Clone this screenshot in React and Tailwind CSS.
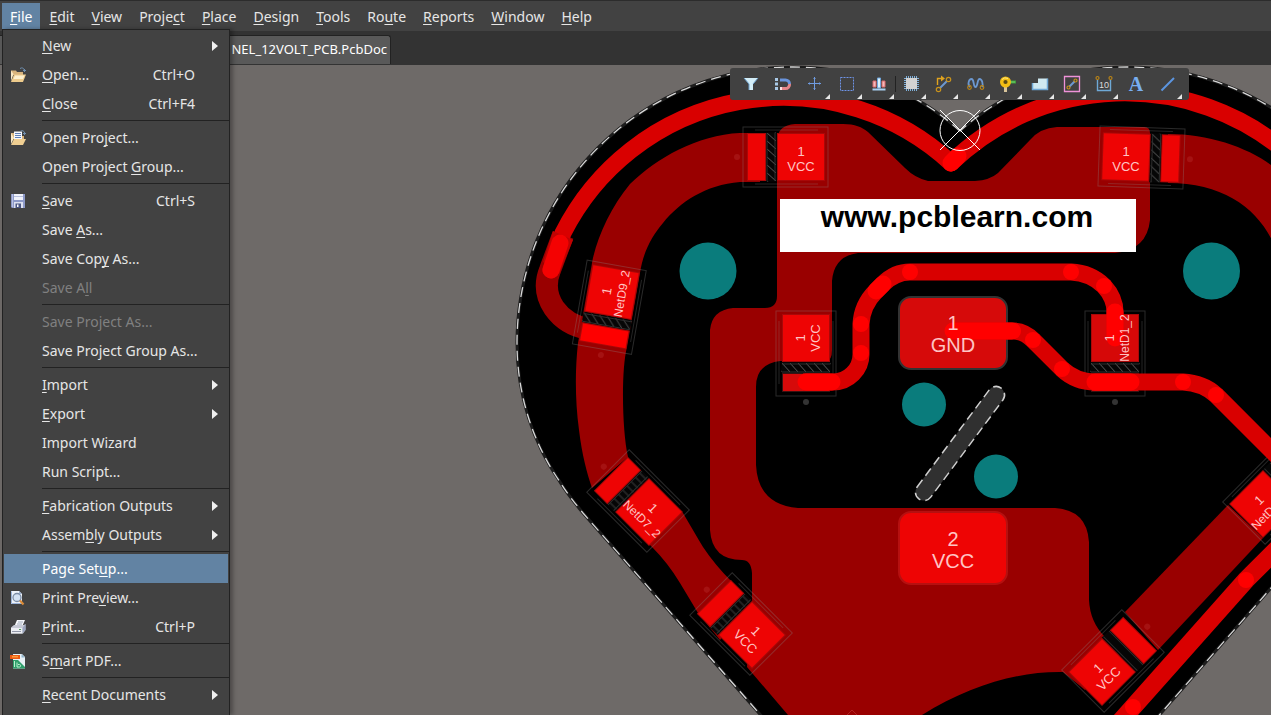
import React from "react";

const MENUS = ["_File", "_Edit", "_View", "Proje_ct", "_Place", "_Design", "_Tools", "Ro_ute", "_Reports", "_Window", "_Help"];

const FILE_GROUPS = [
  [
    { label: "_New", sub: true },
    { label: "_Open...", keys: "Ctrl+O", icon: "open" },
    { label: "_Close", keys: "Ctrl+F4" },
  ],
  [{ label: "Open Pro_ject...", icon: "project" }, { label: "Open Project _Group..." }],
  [
    { label: "_Save", keys: "Ctrl+S", icon: "save" },
    { label: "Save _As..." },
    { label: "Save Cop_y As..." },
    { label: "Save A_ll", disabled: true },
  ],
  [{ label: "Save Project As...", disabled: true }, { label: "Save Project Group As..." }],
  [
    { label: "_Import", sub: true },
    { label: "_Export", sub: true },
    { label: "Import Wizard" },
    { label: "Run Script..." },
  ],
  [{ label: "_Fabrication Outputs", sub: true }, { label: "Assem_bly Outputs", sub: true }],
  [
    { label: "Page Set_up...", active: true },
    { label: "Print Pre_view...", icon: "preview" },
    { label: "_Print...", keys: "Ctrl+P", icon: "print" },
  ],
  [{ label: "S_mart PDF...", icon: "pdf" }],
  [{ label: "_Recent Documents", sub: true }],
];

function Mnemonic({ text }) {
  const i = text.indexOf("_");
  if (i < 0) return <span>{text}</span>;
  return (
    <span>
      {text.slice(0, i)}
      <span className="underline decoration-1 underline-offset-2 [text-decoration-skip-ink:none]">{text[i + 1]}</span>
      {text.slice(i + 2)}
    </span>
  );
}

const FILE_ICONS = {
  open: (
    <>
      <path d="M1 3.500h5l1 1.500h6v3H1z" fill="#d9b47c" />
      <path d="M1 3.500V14l2.500-7z" fill="#fbe9c4" />
      <path d="M4 7.500h12L13 15H1z" fill="#eecb8c" />
      <path d="M5 8.500h9.500l-1.500 3.500H3.500z" fill="#fdf0cf" />
      <path d="M10 1.500c2-1.200 3.500-.5 4.500 1.500M13 3.500h3M14.500 2v3" stroke="#6f8fb0" fill="none" />
    </>
  ),
  project: (
    <>
      <path d="M1 3h4v3h9v3H1z" fill="#d9b47c" />
      <path d="M4 1.500h8V10H4z" fill="#f4f7fd" />
      <path d="M5 3.500h6M5 5.500h6M5 7.500h6" stroke="#5f7fb5" />
      <path d="M1 3v11l3-6z" fill="#fbe9c4" />
      <path d="M4 9h12l-3 6H1z" fill="#f0cf92" />
      <path d="M10.500 1c2-.8 3.500 0 4 1.500M13 3.500h3M14.500 2v3" stroke="#6f8fb0" fill="none" />
    </>
  ),
  save: (
    <>
      <path d="M1 1h14v14H2l-1-1z" fill="#8d99c8" />
      <path d="M4 1h9v6H4z" fill="#f1f3fb" />
      <path d="M4 3.500h9" stroke="#b8c0de" />
      <path d="M4 9h9v6H4z" fill="#dde1f0" />
      <path d="M5.500 10.500h5.500V15H5.500z" fill="#4b5684" />
      <path d="M7 11.500h1.500V14H7z" fill="#fff" />
      <path d="M2.500 1v13" stroke="#b9c1e2" />
    </>
  ),
  preview: (
    <>
      <path d="M1 1h8l3 3v10H1z" fill="#eef3fa" />
      <path d="M9 1l3 3H9z" fill="#9fb4d3" />
      <path d="M1.500 1.500v12h10" stroke="#9db5da" fill="none" />
      <circle cx="7" cy="7.500" r="4" fill="#d4e2f3" stroke="#7d8ea6" strokeWidth="1.300" />
      <path d="M10 10.500l3.500 4" stroke="#d98a38" strokeWidth="2.200" />
    </>
  ),
  print: (
    <>
      <path d="M7 1h8l-3 7H4z" fill="#f6f7fa" />
      <path d="M8 3h5M7 5h5M6 7h4" stroke="#8b95a8" strokeWidth=".8" />
      <path d="M1 8.500L4 6h10l1.500-1v6L13 14.500H1z" fill="#c6c9d4" />
      <path d="M1 9h11.500v5.500H1z" fill="#eceef3" />
      <path d="M2 12.500h9" stroke="#9297a8" />
      <path d="M12.500 9L15.500 5v6L12.500 14.500z" fill="#9aa3bd" />
      <path d="M9 10.500h2" stroke="#4f9a58" />
    </>
  ),
  pdf: (
    <>
      <path d="M3 1h9l3 3v11.500H3z" fill="#e9f1f6" />
      <path d="M11.500 1L15 4.500h-3.500z" fill="#8fb4cc" />
      <path d="M3 7h5l7 7v1.500H3z" fill="#2f9e6b" />
      <path d="M4.500 8v6M7 9.500v4.500h2.500c1.500 0 1.500-2.500 0-2.500H8" stroke="#baf0cf" fill="none" />
      <path d="M0 2h10v4H0z" fill="#ee5a12" />
      <path d="M2 3.800h6" stroke="#ffb04a" strokeWidth="1.200" />
    </>
  ),
};

function MenuBar() {
  return (
    <nav aria-label="Main menu" className="flex h-[31px] shrink-0 items-stretch gap-px border-t border-[#2c2c2c] bg-[#424242] pl-[2px] pt-[2px] pb-[2px]">
      {MENUS.map((m, i) => (
        <button
          key={m}
          type="button"
          className={
            i === 0
              ? "bg-[#6283a3] px-2 pt-0.5 text-sm leading-6 text-white"
              : "px-2 pt-0.5 text-sm leading-6 text-[#e6e6e6]"
          }
        >
          <Mnemonic text={m} />
        </button>
      ))}
    </nav>
  );
}

function MenuItem({ item }) {
  const tone = item.disabled ? "text-[#808080]" : item.active ? "bg-[#6283a3] text-white" : "text-[#e6e6e6]";
  return (
    <button
      type="button"
      role="menuitem"
      disabled={item.disabled}
      className={"flex h-[29px] w-full items-center pl-1.5 pr-2.5 text-left text-sm " + tone}
    >
      <span className="w-8 shrink-0">
        {item.icon && (
          <svg className="h-4 w-4" viewBox="0 0 16 16" aria-hidden="true">
            {FILE_ICONS[item.icon]}
          </svg>
        )}
      </span>
      <span className="flex-1 whitespace-nowrap">
        <Mnemonic text={item.label} />
      </span>
      {item.keys && <span className="pr-[23px]">{item.keys}</span>}
      {item.sub && (
        <svg className="h-[10px] w-[6px]" viewBox="0 0 6 10" aria-hidden="true">
          <path d="M0 0l6 5-6 5z" fill="#f0f0f0" />
        </svg>
      )}
    </button>
  );
}

function FileMenu() {
  return (
    <div
      role="menu"
      aria-label="File"
      className="absolute top-[29px] bottom-0 left-[2px] z-20 w-[228px] overflow-hidden border border-b-0 border-[#222222] bg-[#424242] px-px pt-px shadow-[3px_0_4px_rgba(0,0,0,0.3)]"
    >
      {FILE_GROUPS.map((group, i) => (
        <div key={i}>
          {i > 0 && <div className="-mr-px ml-[38px] h-[5px] py-[2px]"><div className="h-px bg-[#222222]" /></div>}
          {group.map((item) => (
            <MenuItem key={item.label} item={item} />
          ))}
        </div>
      ))}
    </div>
  );
}

const TOOLS = [
  { name: "Filter", icon: (
    <>
      <path d="M5 6h14l-5 6v6h-4v-6z" fill="#d3edf7" />
      <path d="M5 6l5 6v6M19 6l-5 6" stroke="#6fa3cf" fill="none" />
    </>
  ) },
  { name: "Snapping", icon: (
    <>
      <path d="M4 6h3v3H4zM4 10.500h3v3H4zM4 15h3v3H4z" fill="#a9c9e6" />
      <path d="M9 8h5.500a4 4 0 0 1 4 4" stroke="#6a94dc" strokeWidth="3" fill="none" />
      <path d="M9 16.500h5.500a4 4 0 0 0 4-4.500" stroke="#e5868a" strokeWidth="3" fill="none" />
      <path d="M9 16.500h2" stroke="#fbe0e0" strokeWidth="3" />
    </>
  ) },
  { name: "Move", more: true, icon: (
    <>
      <path d="M11.500 5v13M5 11.500h13" stroke="#6f9be0" />
      <path d="M10.500 6h2v1h-2zM10.500 16h2v1h-2zM6 10.500h1v2H6zM16 10.500h1v2h-1z" fill="#6f9be0" />
    </>
  ) },
  { name: "Select area", more: true, icon: <path d="M5.500 5.500h13v13h-13z" stroke="#6f94e8" strokeDasharray="2 1" fill="none" /> },
  { name: "Align", more: true, icon: (
    <>
      <path d="M6 9h3v6H6zM15 9h3v6h-3z" fill="#f4b9b9" stroke="#d9686c" />
      <path d="M10.500 6h3v10h-3z" fill="#d8f1fa" stroke="#6fa5dc" />
      <path d="M5.500 17.500h13" stroke="#a9d0f2" strokeWidth="2" />
    </>
  ) },
  { name: "Place component", more: true, icon: (
    <>
      <path d="M7.500 4v15M9.500 4v15M11.500 4v15M13.500 4v15M15.500 4v15M17.500 4v15M5 6.500h15M5 8.500h15M5 10.500h15M5 12.500h15M5 14.500h15M5 16.500h15" stroke="#7fb0da" />
      <path d="M7 6h11v11H7z" fill="#d2d2d2" />
    </>
  ) },
  { name: "Interactive routing", more: true, icon: (
    <>
      <path d="M9 16l7-7" stroke="#6c98d0" strokeWidth="2" />
      <circle cx="17.500" cy="7.500" r="2.200" stroke="#c8921c" strokeWidth="1.200" fill="none" />
      <circle cx="7.500" cy="17.500" r="2.200" stroke="#c8921c" strokeWidth="1.200" fill="none" />
      <path d="M6.500 13V6.500h4" stroke="#e0a31e" strokeWidth="1.400" fill="none" />
      <path d="M10 3.500l4 3-4 3z" fill="#e0a31e" />
    </>
  ) },
  { name: "Length tuning", more: true, icon: (
    <>
      <path d="M7 15c-3-3-1-8 1.500-8 3 0 1.500 8 4 8s1.500-8 4-8 4 5 2.500 8" stroke="#6c98d0" strokeWidth="1.800" fill="none" />
      <circle cx="6.500" cy="15.500" r="1.800" stroke="#b98418" strokeWidth="1.200" fill="none" />
      <circle cx="19" cy="15.500" r="1.800" stroke="#b98418" strokeWidth="1.200" fill="none" />
    </>
  ) },
  { name: "Place via", more: true, icon: (
    <>
      <path d="M14 10h7" stroke="#3f9d3f" strokeWidth="3" />
      <path d="M15 10h5" stroke="#79d86b" />
      <path d="M10.500 13v7" stroke="#d8c49a" strokeWidth="3" />
      <circle cx="10.500" cy="10" r="3.800" stroke="#f2bd14" strokeWidth="3.400" fill="#5b4a14" />
      <path d="M7 7.500a5 5 0 0 1 6-1" stroke="#ffe680" fill="none" />
    </>
  ) },
  { name: "Place polygon", more: true, icon: (
    <>
      <path d="M5.500 17.500V11H11V6.500h9.500v11z" fill="#cfe9f1" />
      <path d="M5.500 11v6.500h15v-11" stroke="#6fa9d6" strokeWidth="1.500" fill="none" />
    </>
  ) },
  { name: "Place room", more: true, icon: (
    <>
      <path d="M5.500 4.500h15v15h-15z" stroke="#ee92d8" strokeWidth="1.300" fill="none" />
      <path d="M10.500 14.500l5-5" stroke="#6c98d0" strokeWidth="2" />
      <circle cx="16.500" cy="8.500" r="1.500" stroke="#c8921c" strokeWidth="1.200" fill="none" />
      <circle cx="9.500" cy="15.500" r="1.500" stroke="#c8921c" strokeWidth="1.200" fill="none" />
    </>
  ) },
  { name: "Place dimension", more: true, icon: (
    <>
      <path d="M6.500 8v10.500h13V8" stroke="#6fa9d6" strokeWidth="1.400" fill="none" />
      <circle cx="6.500" cy="6" r="1.500" stroke="#b98418" strokeWidth="1.200" fill="none" />
      <circle cx="19.500" cy="6" r="1.500" stroke="#b98418" strokeWidth="1.200" fill="none" />
      <text x="13" y="16" textAnchor="middle" fill="#dcdcdc" className="font-['Liberation_Sans',sans-serif] text-[9px]">10</text>
    </>
  ) },
  { name: "Place string", icon: (
    <text x="13" y="19" textAnchor="middle" fill="#78aef0" className="font-['Liberation_Serif',serif] text-[20px] font-bold">A</text>
  ) },
  { name: "Place line", more: true, icon: <path d="M6.500 18.500L19 6" stroke="#5b95e0" strokeWidth="2" /> },
];

function Toolbar() {
  return (
    <div role="toolbar" aria-label="Active bar" className="absolute top-[3px] left-[730px] z-10 flex rounded-[3px] bg-[#414141] pr-1.5 pl-[5px]">
      {TOOLS.map((t, i) => (
        <button
          key={t.name}
          type="button"
          aria-label={t.name}
          className={
            "relative flex h-8 w-8 items-center justify-center " +
            (i === 5 ? "before:absolute before:left-0 before:top-2 before:h-4 before:w-px before:bg-[#222222]" : "")
          }
        >
          <svg className="h-6 w-6" viewBox="0 0 24 24" aria-hidden="true">{t.icon}</svg>
          {t.more && (
            <svg className="absolute right-px bottom-px h-[5px] w-[5px]" viewBox="0 0 5 5" aria-hidden="true">
              <path d="M5 0v5H0z" fill="#e6e6e6" />
            </svg>
          )}
        </button>
      ))}
    </div>
  );
}

const PADS = [
  { x: 801, y: 157, r: 90, net: "VCC", t: 0, mirror: true },
  { x: 1126, y: 157, r: -88, net: "VCC", t: 0, mirror: true },
  { x: 612, y: 292, r: 10, net: "NetD9_2", t: -80, small: "#fe0000" },
  { x: 806, y: 338, r: 0, net: "VCC", t: -90, dark: true },
  { x: 1115, y: 338, r: 0, net: "NetD1_2", t: -90, dark: true, big: "#d60808" },
  { x: 649, y: 512, r: 135, net: "NetD7_2", t: 45, hatch: "url(#rungs)" },
  { x: 752, y: 635, r: 135, net: "VCC", t: 45, hatch: "url(#rungs)" },
  { x: 1102, y: 672, r: -135, net: "VCC", t: -45, hatch: "none" },
  { x: 1263, y: 504, r: -135, net: "NetD1_1", t: -45, hatch: "none" },
];

function Pad({ p }) {
  return (
    <g transform={`translate(${p.x} ${p.y}) rotate(${p.r})${p.mirror ? " scale(-1 1)" : ""}`}>
      <rect x="-24.500" y="24" width="49" height="11" fill="#060606" />
      <rect x="-24.500" y="25" width="49" height="9" fill={p.hatch || "url(#hatch)"} />
      <path d="M-24 26H24M-24 34H24" stroke="#2e2e2e" />
      <rect x="-24" y="-24" width="48" height="48" fill="#a80808" />
      <rect x="-23" y="-23" width="46" height="46" fill={p.big || "#ee0404"} />
      <rect x="-24" y="35" width="48" height="19" fill={p.dark ? "#3a1212" : "#a80808"} />
      <rect x="-23" y="36" width="46" height="17" fill={p.small || (p.dark ? "#d60a0a" : "#ee0404")} />
      <rect x="-30" y="-27" width="60" height="85" fill="none" stroke="#8c8c8c" strokeOpacity=".3" />
      <path d="M-27 -17V46M27 -17V46" stroke="#8c8c8c" strokeOpacity=".26" />
      <circle cx="0" cy="64" r="3" fill={p.dark ? "#333333" : "#a51212"} />
    </g>
  );
}

function PadLabel({ p }) {
  return (
    <g
      transform={`translate(${p.x} ${p.y}) rotate(${p.t})`}
      fill="#ffc4c4"
      textAnchor="middle"
      className="font-['Liberation_Sans',sans-serif] text-[13px]"
    >
      <text x="0" y="-1">1</text>
      <text x="0" y="14" className={p.net.length > 3 ? "text-[12px]" : "text-[13px]"}>{p.net}</text>
    </g>
  );
}

const BRIGHT = [
  [861, 353], [861, 324], [910, 272], [1071, 272], [1104, 286],
  [1013, 331], [1033, 340], [1062, 369], [1183, 382], [1216, 395], [1246, 580], [1133, 707],
];

function Board() {
  return (
    <svg
      className="absolute inset-0 h-full w-full"
      viewBox="0 65 1271 650"
      preserveAspectRatio="xMinYMin slice"
      role="img"
      aria-label="Circuit board layout"
    >
      <defs>
        <pattern id="hatch" width="8" height="9" patternUnits="userSpaceOnUse" x="-24" y="25">
          <path d="M-1 -1L9 10" stroke="#5a5a5a" strokeWidth="1" />
        </pattern>
        <pattern id="rungs" width="6" height="9" patternUnits="userSpaceOnUse" x="-24" y="25">
          <path d="M3 0V9" stroke="#3c3c3c" strokeWidth="1" />
        </pattern>
      </defs>

      <path
        d="M960 131C915 90 855 67 793 67A276 276 0 0 0 517 343C517 395 533 443 560 482Q568 495 583 513L787 745H1133L1337 513Q1352 495 1360 482C1387 443 1403 395 1403 343A276 276 0 0 0 1127 67C1065 67 1005 90 960 131Z"
        fill="#000000"
        stroke="#1c1c1c"
        strokeWidth="3"
      />
      <path
        d="M960 131C915 90 855 67 793 67A276 276 0 0 0 517 343C517 395 533 443 560 482Q568 495 583 513L787 745M1133 745L1337 513M1403 343A276 276 0 0 0 1127 67C1065 67 1005 90 960 131"
        fill="none"
        stroke="#d8d8d8"
        strokeWidth="1.300"
        strokeDasharray="10 6"
      />

      <g fill="#990000">
        <path d="M760 133H740C697 135 657 158 630 184C610 208 596 240 592 263L578 343C575 370 575 400 579 430C582 455 587 473 592 488L628 457C622 430 621 370 627 347L640 273C643 252 652 236 663 223C680 202 705 185 740 182H760Z" />
        <path d="M683 513C690 525 697 537 703 547Q715 565 732 582L752 601 720 640 698 613C692 603 686 593 680 583Q668 563 652 547L640 535 670 500Z" />
        <path d="M777 140Q778 125 795 124H843C855 124 862 127 868 132L905 168Q915 178 928 181H975Q990 180 998 173L1030 140Q1040 128 1057 127H1144Q1150 127 1150 133V220Q1147 250 1115 253H858Q834 256 832 281V350Q832 361 826 361H780Q756 364 756 387V465Q758 505 798 508H1055Q1087 510 1089 542V600Q1090 622 1105 637L1120 655 1085 690 1063 672C1020 671 970 685 922 715H788L747 667 752 600V573Q751 560 742 560Q712 560 710 530V330Q712 310 733 308H765Q777 308 777 296Z" />
        <path d="M1168 134C1210 134 1250 148 1275 168V247C1260 210 1225 183 1168 183Z" />
        <path d="M1228 505L1263 538 1158 650 1125 612Z" />
      </g>

      <path d="M563 235L550 270Q542 290 554 308Q566 325 588 329" fill="none" stroke="#990000" strokeWidth="22" />

      <g fill="none" stroke="#d90000" strokeWidth="17">
        <path d="M551 270L563 233A247 247 0 0 1 951 163" strokeLinecap="round" />
        <path d="M951 163A250 250 0 0 1 1285 151" strokeLinecap="round" />
        <path d="M1290 536L1246 580L1118 724" strokeWidth="18" />
      </g>
      <path d="M553 231L573 240 559 274 543 262Z" fill="#c00202" />
      <path d="M560 243L551 270" stroke="#f40202" strokeWidth="17" strokeLinecap="round" />
      <path d="M951 163L958 156" stroke="#ff0000" strokeWidth="17" strokeLinecap="round" />

      <rect x="899" y="297" width="108" height="72" rx="12" fill="#d60a0a" stroke="#333333" strokeWidth="2" />
      <rect x="899" y="512" width="108" height="72" rx="12" fill="#ee0404" stroke="#b51010" strokeWidth="2" />

      {PADS.map((p) => (
        <Pad key={`${p.x}-${p.y}`} p={p} />
      ))}

      <g fill="none" stroke="#d90000" strokeWidth="17">
        <path d="M803 382H832A28 28 0 0 0 861 353V324Q862 305 876 291L883 284Q895 272 910 272H1071Q1091 273 1104 286Q1115 298 1115 312V338" />
        <path d="M953 331H1013Q1024 331 1033 340L1062 369Q1076 382 1095 382H1183Q1203 383 1216 395L1280 459" />
      </g>
      <g fill="none" stroke="#ff0000" strokeWidth="17" strokeLinecap="round">
        <path d="M806 382H832" />
        <path d="M876 291L883 284" />
        <path d="M953 331H1012" />
        <path d="M1115 312V338" />
        <path d="M1095 382H1131" />
      </g>
      <g fill="#ff0000">
        {BRIGHT.map(([x, y]) => (
          <circle key={`${x}-${y}`} cx={x} cy={y} r="8" />
        ))}
      </g>

      {PADS.map((p) => (
        <PadLabel key={`${p.x}-${p.y}`} p={p} />
      ))}
      <g
        fill="#ffc4c4"
        textAnchor="middle"
        className="font-['Liberation_Sans',sans-serif] text-[20px]"
      >
        <text x="953" y="330">1</text>
        <text x="953" y="352">GND</text>
        <text x="953" y="546">2</text>
        <text x="953" y="568">VCC</text>
      </g>

      <g fill="#0a7c7c">
        <circle cx="708" cy="271" r="28.500" />
        <circle cx="1211.500" cy="271" r="28.500" />
        <circle cx="924" cy="404.500" r="22" />
        <circle cx="996" cy="476.500" r="22" />
      </g>
      <rect
        x="-69"
        y="-8.500"
        width="138"
        height="17"
        rx="8.500"
        transform="translate(960 443.500) rotate(-53.400)"
        fill="#303030"
        stroke="#d0d0d0"
        strokeWidth="1.500"
        strokeDasharray="9 5"
      />
      <path d="M846 716l6-6 6 6" fill="none" stroke="#b02020" />

      <path d="M940 110l40 40M980 110l-40 40" stroke="#ffffff" />
      <circle cx="960" cy="130.500" r="20" fill="none" stroke="#ffffff" />

      <rect x="780" y="199" width="356" height="53" fill="#ffffff" />
      <text x="957" y="227" textAnchor="middle" fill="#000000" className="font-['Liberation_Sans',sans-serif] text-[30px] font-bold">
        www.pcblearn.com
      </text>
    </svg>
  );
}

export default function App() {
  return (
    <div className="relative flex h-screen flex-col overflow-hidden bg-[#424242] font-['Noto_Sans',sans-serif]">
      <MenuBar />
      <div className="flex h-[34px] shrink-0 items-end bg-[#333333] pb-px">
        <button
          type="button"
          className="h-[29px] w-[391px] rounded-tr-[3px] border-t border-r border-[#222222] bg-[#595959] pr-[3px] text-right text-[13px] text-white"
        >
          NEL_12VOLT_PCB.PcbDoc
        </button>
      </div>
      <main className="relative flex-1 overflow-hidden bg-[#6e6a68]">
        <Board />
        <Toolbar />
      </main>
      <FileMenu />
    </div>
  );
}
